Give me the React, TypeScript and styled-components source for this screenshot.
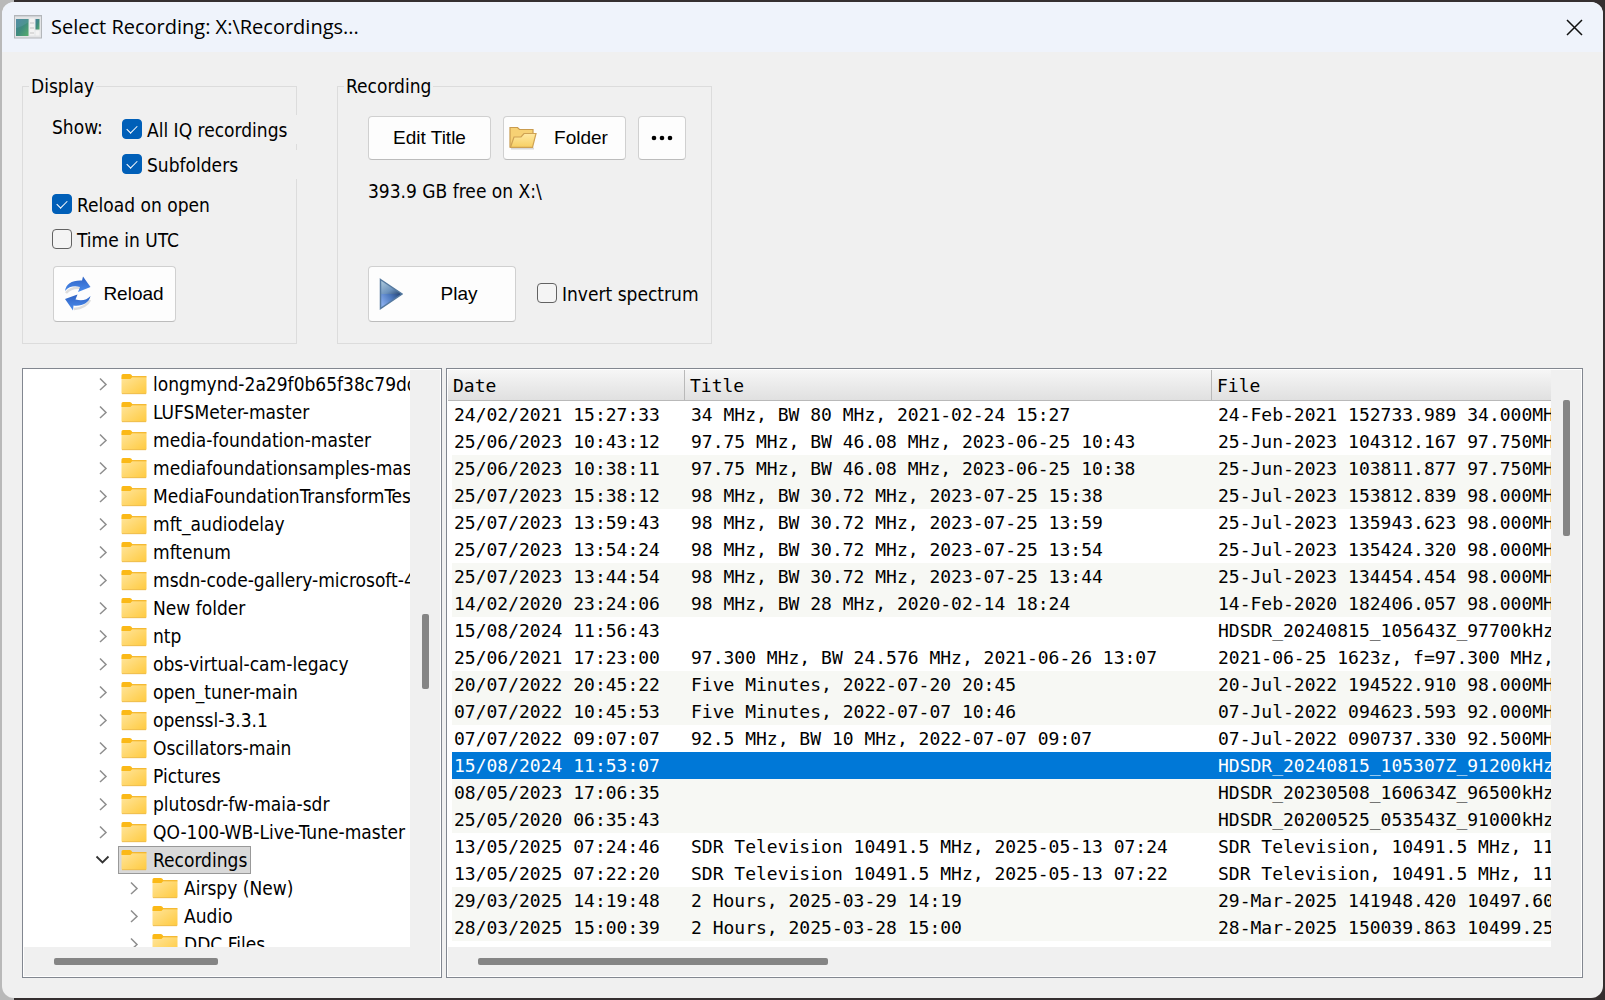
import React from "react";
import styled, { createGlobalStyle, css } from "styled-components";

const uiFont = `Tahoma, "DejaVu Sans Condensed", "Noto Sans", sans-serif`;
const buttonFont = `"Microsoft Sans Serif", "Liberation Sans", Arial, sans-serif`;
const monoFont = `Consolas, "DejaVu Sans Mono", monospace`;

const GlobalStyle = createGlobalStyle`
  *, *::before, *::after { box-sizing: border-box; }
  body {
    margin: 0;
    color: #000;
    font-family: ${uiFont};
    font-size: 19px;
    line-height: 24px;
  }
`;

const Desktop = styled.div`
  height: 100vh;
  min-height: 640px;
  padding: 2px;
  overflow: hidden;
  background: linear-gradient(to right, #b9b9b9 14px, #352f30 14px);
`;

const Dialog = styled.main`
  height: 100%;
  display: flex;
  flex-direction: column;
  overflow: hidden;
  border-radius: 12px;
  background: #f0f0f0;
`;

const TitleBar = styled.header`
  display: flex;
  align-items: center;
  flex: none;
  height: 50px;
  padding: 0 16px 0 12px;
  gap: 9px;
  background: #eff3fb;
`;

const Heading = styled.h1`
  flex: 1;
  margin: 0;
  font: 400 20px/28px "Segoe UI", "Open Sans", sans-serif;
`;

const CloseButton = styled.button`
  display: flex;
  padding: 4px;
  border: 0;
  background: none;
`;

const Content = styled.div`
  flex: 1;
  min-height: 0;
  display: flex;
  flex-direction: column;
  gap: 24px;
  padding: 21px 20px 20px;
`;

const Groups = styled.div`
  display: flex;
  flex: none;
  gap: 40px;
`;

const Group = styled.fieldset<{ $width: number }>`
  display: flex;
  flex-direction: column;
  align-items: stretch;
  width: ${(p) => p.$width}px;
  height: 271px;
  min-width: 0;
  margin: 0;
  padding: 0 0 0 29px;
  border: 1px solid #dcdcdc;
`;

const Legend = styled.legend`
  margin-left: -23px;
  padding: 0 2px;
  line-height: 27px;
`;

const ShowBlock = styled.div`
  display: flex;
  padding-top: 15px;
`;

const ShowCaption = styled.span`
  width: 70px;
  line-height: 24px;
`;

const ShowOptions = styled.div`
  flex: 1;
  display: flex;
  flex-direction: column;
  gap: 6px;
  margin-right: -1px;
`;

const Option = styled.label`
  display: flex;
  align-items: center;
  gap: 5px;
  height: 29px;
  background: #f0f0f0;
  white-space: nowrap;
`;

const checkedBox = css`
  border-color: #005fb8;
  background: #005fb8;
  &::after {
    content: "";
    width: 10px;
    height: 6px;
    margin-bottom: 2px;
    border: solid #fff;
    border-width: 0 0 1px 1px;
    transform: rotate(-45deg);
  }
`;

const Box = styled.input.attrs({ type: "checkbox" })`
  appearance: none;
  display: flex;
  align-items: center;
  justify-content: center;
  flex: none;
  width: 20px;
  height: 20px;
  margin: 0 0 2px;
  border: 1px solid #626262;
  border-radius: 4px;
  background: #f4f4f4;
  &:checked { ${checkedBox} }
`;

const OptionList = styled.div`
  display: flex;
  flex-direction: column;
  gap: 6px;
  padding: 11px 20px 0 0;
`;

const PushButton = styled.button<{ $width: number; $tall?: boolean; $inset?: number }>`
  display: flex;
  align-items: center;
  width: ${(p) => p.$width}px;
  height: ${(p) => (p.$tall ? 56 : 44)}px;
  padding: 0 0 0 ${(p) => p.$inset ?? 0}px;
  border: 1px solid #d0d0d0;
  border-bottom-color: #bcbcbc;
  border-radius: 4px;
  background: #fdfdfd;
  color: #000;
  font: 19px/24px ${buttonFont};
`;

const ButtonText = styled.span`
  flex: 1;
  display: flex;
  justify-content: center;
`;

const ReloadRow = styled.div`
  padding: 12px 0 0 1px;
`;

const RecordingBody = styled.div`
  display: flex;
  flex-direction: column;
  padding: 16px 0 0 1px;
`;

const ButtonRow = styled.div`
  display: flex;
  gap: 12px;
`;

const FreeSpace = styled.p`
  margin: 19px 0 63px;
`;

const PlayRow = styled.div`
  display: flex;
  align-items: center;
  gap: 21px;
`;

const Panes = styled.div`
  flex: 1;
  min-height: 0;
  display: flex;
  gap: 4px;
`;

const Pane = styled.section<{ $width?: number }>`
  display: grid;
  grid-template: minmax(0, 1fr) 29px / minmax(0, 1fr) 30px;
  flex: ${(p) => (p.$width ? `none` : `1`)};
  width: ${(p) => (p.$width ? `${p.$width}px` : `auto`)};
  min-width: 0;
  padding: 1px;
  border: 1px solid #828790;
  background: #fff;
`;

const Viewport = styled.div`
  overflow: hidden;
  background: #fff;
`;

const VTrack = styled.div`
  display: flex;
  flex-direction: column;
  align-items: center;
  padding-left: 1px;
  background: #f0f0f0;
`;

const HTrack = styled.div`
  grid-column: 1 / 3;
  display: flex;
  align-items: center;
  background: #f0f0f0;
`;

const Thumb = styled.div<{ $start: string; $length: string; $vertical?: boolean }>`
  flex: none;
  border-radius: 2px;
  background: #858585;
  ${(p) =>
    p.$vertical
      ? css`
          width: 7px;
          height: ${p.$length};
          margin-top: ${p.$start};
        `
      : css`
          height: 7px;
          width: ${p.$length};
          margin-left: ${p.$start};
        `}
`;

const Tree = styled.ul`
  margin: 0;
  padding: 0 0 0 68px;
  list-style: none;
`;

const Branch = styled.ul`
  margin: 0;
  padding: 0 0 0 31px;
  list-style: none;
`;

const NodeRow = styled.div`
  display: flex;
  align-items: center;
  height: 28px;
  gap: 5px;
  & svg { flex: none; }
`;

const NodeLabel = styled.span<{ $selected?: boolean }>`
  display: flex;
  flex: none;
  align-items: center;
  gap: 6px;
  height: 28px;
  padding: 0 3px 0 2px;
  border: 1px solid ${(p) => (p.$selected ? "#999" : "transparent")};
  background: ${(p) => (p.$selected ? "#d9d9d9" : "transparent")};
  white-space: nowrap;
`;

const Table = styled.table`
  width: 100%;
  table-layout: fixed;
  border-spacing: 0;
  font: 18px/27px ${monoFont};
`;

const DateCol = styled.col`
  width: 237px;
`;

const TitleCol = styled.col`
  width: 527px;
`;

const Th = styled.th`
  height: 31px;
  padding: 0 0 0 5px;
  border-right: 1px solid #b9b9b9;
  border-bottom: 1px solid #b9b9b9;
  background: linear-gradient(#f6f6f6, #e0e0e0);
  font-weight: 400;
  text-align: left;
  &:last-child { border-right: 0; }
`;

const Td = styled.td`
  height: 27px;
  padding: 0 0 0 6px;
  overflow: hidden;
  white-space: nowrap;
  &:first-child {
    padding-left: 2px;
    border-left: 4px solid #fff;
  }
`;

const Tr = styled.tr<{ $shaded: boolean; $selected: boolean }>`
  background: ${(p) => (p.$selected ? "#0078d7" : p.$shaded ? "#f7f8f4" : "#fff")};
  color: ${(p) => (p.$selected ? "#fff" : "#000")};
`;

const AppIcon = () => (
  <svg width="28" height="24" viewBox="0 0 28 24" aria-hidden="true">
    <defs>
      <linearGradient id="screen" x1="0" y1="0" x2="1" y2="1">
        <stop offset="0" stopColor="#447f9b" />
        <stop offset="0.5" stopColor="#3f8b7e" />
        <stop offset="1" stopColor="#58ad6c" />
      </linearGradient>
    </defs>
    <rect x="0.5" y="0.5" width="27" height="22.5" fill="#e3e4e6" stroke="#b3b6ba" />
    <path d="M1 1.5h26" stroke="#cfd2d6" />
    <rect x="2" y="4" width="12.5" height="17" fill="url(#screen)" />
    <path d="M2 13Q8 12 14.500 7V4H2Z" fill="#6ba3b5" opacity=".35" />
    <rect x="15.500" y="3.500" width="5" height="17" fill="#f3f3f3" />
    <path d="M16 8h4M16 13h4M16 18h4" stroke="#d3d3d3" strokeWidth="1.500" />
    <rect x="21.500" y="4" width="4" height="10.500" fill="url(#screen)" />
    <rect x="21.500" y="15.500" width="4" height="5" fill="#f3f3f3" />
  </svg>
);

const CloseIcon = () => (
  <svg width="17" height="17" viewBox="0 0 17 17" aria-hidden="true">
    <path d="M1 1L16 16M16 1L1 16" stroke="#111" strokeWidth="1.500" />
  </svg>
);

const FolderIcon = () => (
  <svg width="26" height="22" viewBox="0 0 26 22" aria-hidden="true">
    <defs>
      <linearGradient id="folder" x1="0" y1="0" x2="1" y2="1">
        <stop offset="0" stopColor="#ffe59c" />
        <stop offset="1" stopColor="#ffca3e" />
      </linearGradient>
    </defs>
    <rect x="0.500" y="3.500" width="25" height="17.500" rx="1" fill="url(#folder)" />
    <path d="M10 3.700H25.500" fill="none" stroke="#f3b424" strokeWidth="1.200" />
    <path d="M0.500 2.500Q0.500 1 2 1H9Q10.500 1 11.500 3.500L9.500 6H0.500Z" fill="#fbb917" />
    <path d="M1 20.700H25" stroke="#e9b84d" strokeWidth="0.800" />
  </svg>
);

const OpenFolderIcon = () => (
  <svg width="28" height="24" viewBox="0 0 28 24" aria-hidden="true">
    <defs>
      <linearGradient id="openFront" x1="0" y1="0" x2="0" y2="1">
        <stop offset="0" stopColor="#ffe9a3" />
        <stop offset="1" stopColor="#f7cf62" />
      </linearGradient>
    </defs>
    <path d="M2 22.500H25" stroke="#d8d8d8" strokeWidth="2" />
    <path d="M1 21V1.500H8.500L10.500 3.500H24V8L23 21Z" fill="#f7d174" stroke="#c99b4e" strokeWidth="1.200" />
    <path d="M1.500 21.300L5 11H12L15 7.500H27L23.500 21.300Z" fill="url(#openFront)" stroke="#cfa253" strokeWidth="1.200" />
  </svg>
);

const ReloadIcon = () => (
  <svg width="28" height="36" viewBox="0 0 28 36" aria-hidden="true">
    <defs>
      <linearGradient id="arrows" x1="0" y1="0" x2="0" y2="1">
        <stop offset="0" stopColor="#2f62c4" />
        <stop offset="1" stopColor="#4a8cec" />
      </linearGradient>
    </defs>
    <path d="M2 17Q7 11 17 12M10 33Q22 32 26 24" stroke="#ddd" strokeWidth="2.500" fill="none" />
    <path d="M1 15C2 8 8 4 18 4.500L19 0.500L26.500 11L14 16L16 11C10 9.500 5 10.500 1 15Z" fill="url(#arrows)" />
    <path d="M26.500 20C25 27 18 30.500 9.500 29.500L9 34.500L1 23L13.500 18.500L11.500 23.500C18 25 23 24 26.500 20Z" fill="url(#arrows)" />
  </svg>
);

const PlayIcon = () => (
  <svg width="24" height="32" viewBox="0 0 24 32" aria-hidden="true">
    <defs>
      <linearGradient id="playTop" x1="0" y1="0" x2="1" y2="1">
        <stop offset="0" stopColor="#b4cfe0" />
        <stop offset="0.600" stopColor="#6d93bd" />
        <stop offset="1" stopColor="#23426f" />
      </linearGradient>
      <linearGradient id="playBottom" x1="0" y1="0.500" x2="1" y2="0">
        <stop offset="0" stopColor="#86abeb" />
        <stop offset="0.500" stopColor="#4c78bd" />
        <stop offset="1" stopColor="#203f70" />
      </linearGradient>
    </defs>
    <path d="M1.500 1.500L23 16H1.500Z" fill="url(#playTop)" />
    <path d="M1.500 16H23L1.500 30.500Z" fill="url(#playBottom)" />
    <path d="M1.500 1.500L23 16L1.500 30.500Z" fill="none" stroke="#55799f" strokeWidth="1.500" />
  </svg>
);

const DotsIcon = () => (
  <svg width="22" height="6" viewBox="0 0 22 6" aria-hidden="true">
    <circle cx="3" cy="3" r="2.300" />
    <circle cx="11" cy="3" r="2.300" />
    <circle cx="19" cy="3" r="2.300" />
  </svg>
);

const Chevron = ({ open }: { open?: boolean }) => (
  <svg width="21" height="14" viewBox="0 0 21 14" aria-hidden="true">
    {open ? (
      <path d="M4.500 3.500L10.500 9.500L16.500 3.500" fill="none" stroke="#333" strokeWidth="1.800" />
    ) : (
      <path d="M8 1.500L14 7.500L8 13" fill="none" stroke="#8e8e8e" strokeWidth="1.500" />
    )}
  </svg>
);

const folders = [
  "longmynd-2a29f0b65f38c79dd3",
  "LUFSMeter-master",
  "media-foundation-master",
  "mediafoundationsamples-master",
  "MediaFoundationTransformTest",
  "mft_audiodelay",
  "mftenum",
  "msdn-code-gallery-microsoft-4",
  "New folder",
  "ntp",
  "obs-virtual-cam-legacy",
  "open_tuner-main",
  "openssl-3.3.1",
  "Oscillators-main",
  "Pictures",
  "plutosdr-fw-maia-sdr",
  "QO-100-WB-Live-Tune-master",
];

const subfolders = ["Airspy (New)", "Audio", "DDC Files"];

const recordings: [string, string, string][] = [
  ["24/02/2021 15:27:33", "34 MHz, BW 80 MHz, 2021-02-24 15:27", "24-Feb-2021 152733.989 34.000MHz"],
  ["25/06/2023 10:43:12", "97.75 MHz, BW 46.08 MHz, 2023-06-25 10:43", "25-Jun-2023 104312.167 97.750MHz"],
  ["25/06/2023 10:38:11", "97.75 MHz, BW 46.08 MHz, 2023-06-25 10:38", "25-Jun-2023 103811.877 97.750MHz"],
  ["25/07/2023 15:38:12", "98 MHz, BW 30.72 MHz, 2023-07-25 15:38", "25-Jul-2023 153812.839 98.000MHz"],
  ["25/07/2023 13:59:43", "98 MHz, BW 30.72 MHz, 2023-07-25 13:59", "25-Jul-2023 135943.623 98.000MHz"],
  ["25/07/2023 13:54:24", "98 MHz, BW 30.72 MHz, 2023-07-25 13:54", "25-Jul-2023 135424.320 98.000MHz"],
  ["25/07/2023 13:44:54", "98 MHz, BW 30.72 MHz, 2023-07-25 13:44", "25-Jul-2023 134454.454 98.000MHz"],
  ["14/02/2020 23:24:06", "98 MHz, BW 28 MHz, 2020-02-14 18:24", "14-Feb-2020 182406.057 98.000MHz"],
  ["15/08/2024 11:56:43", "", "HDSDR_20240815_105643Z_97700kHz"],
  ["25/06/2021 17:23:00", "97.300 MHz, BW 24.576 MHz, 2021-06-26 13:07", "2021-06-25 1623z, f=97.300 MHz,"],
  ["20/07/2022 20:45:22", "Five Minutes, 2022-07-20 20:45", "20-Jul-2022 194522.910 98.000MHz"],
  ["07/07/2022 10:45:53", "Five Minutes, 2022-07-07 10:46", "07-Jul-2022 094623.593 92.000MHz"],
  ["07/07/2022 09:07:07", "92.5 MHz, BW 10 MHz, 2022-07-07 09:07", "07-Jul-2022 090737.330 92.500MHz"],
  ["15/08/2024 11:53:07", "", "HDSDR_20240815_105307Z_91200kHz"],
  ["08/05/2023 17:06:35", "", "HDSDR_20230508_160634Z_96500kHz"],
  ["25/05/2020 06:35:43", "", "HDSDR_20200525_053543Z_91000kHz"],
  ["13/05/2025 07:24:46", "SDR Television 10491.5 MHz, 2025-05-13 07:24", "SDR Television, 10491.5 MHz, 11"],
  ["13/05/2025 07:22:20", "SDR Television 10491.5 MHz, 2025-05-13 07:22", "SDR Television, 10491.5 MHz, 11"],
  ["29/03/2025 14:19:48", "2 Hours, 2025-03-29 14:19", "29-Mar-2025 141948.420 10497.60"],
  ["28/03/2025 15:00:39", "2 Hours, 2025-03-28 15:00", "28-Mar-2025 150039.863 10499.25"],
];

const selectedRow = 13;

const Check = ({ label, checked }: { label: string; checked?: boolean }) => (
  <Option>
    <Box defaultChecked={checked} />
    {label}
  </Option>
);

const TreeNode = ({ name, open }: { name: string; open?: boolean }) => (
  <NodeRow>
    <Chevron open={open} />
    <NodeLabel $selected={open}>
      <FolderIcon />
      {name}
    </NodeLabel>
  </NodeRow>
);

export default function App() {
  return (
    <Desktop>
      <GlobalStyle />
      <Dialog>
        <TitleBar>
          <AppIcon />
          <Heading>Select Recording: X:\Recordings...</Heading>
          <CloseButton aria-label="Close">
            <CloseIcon />
          </CloseButton>
        </TitleBar>
        <Content>
          <Groups>
            <Group $width={275}>
              <Legend>Display</Legend>
              <ShowBlock>
                <ShowCaption>Show:</ShowCaption>
                <ShowOptions>
                  <Check label="All IQ recordings" checked />
                  <Check label="Subfolders" checked />
                </ShowOptions>
              </ShowBlock>
              <OptionList>
                <Check label="Reload on open" checked />
                <Check label="Time in UTC" />
              </OptionList>
              <ReloadRow>
                <PushButton $width={123} $inset={10} $tall>
                  <ReloadIcon />
                  <ButtonText>Reload</ButtonText>
                </PushButton>
              </ReloadRow>
            </Group>
            <Group $width={375}>
              <Legend>Recording</Legend>
              <RecordingBody>
                <ButtonRow>
                  <PushButton $width={123}>
                    <ButtonText>Edit Title</ButtonText>
                  </PushButton>
                  <PushButton $width={123} $inset={5}>
                    <OpenFolderIcon />
                    <ButtonText>Folder</ButtonText>
                  </PushButton>
                  <PushButton $width={48} aria-label="More">
                    <ButtonText>
                      <DotsIcon />
                    </ButtonText>
                  </PushButton>
                </ButtonRow>
                <FreeSpace>393.9 GB free on X:\</FreeSpace>
                <PlayRow>
                  <PushButton $width={148} $inset={10} $tall>
                    <PlayIcon />
                    <ButtonText>Play</ButtonText>
                  </PushButton>
                  <Check label="Invert spectrum" />
                </PlayRow>
              </RecordingBody>
            </Group>
          </Groups>
          <Panes>
            <Pane $width={420}>
              <Viewport>
                <Tree>
                  {folders.map((name) => (
                    <li key={name}>
                      <TreeNode name={name} />
                    </li>
                  ))}
                  <li>
                    <TreeNode name="Recordings" open />
                    <Branch>
                      {subfolders.map((name) => (
                        <li key={name}>
                          <TreeNode name={name} />
                        </li>
                      ))}
                    </Branch>
                  </li>
                </Tree>
              </Viewport>
              <VTrack>
                <Thumb $vertical $start="244px" $length="75px" />
              </VTrack>
              <HTrack>
                <Thumb $start="30px" $length="164px" />
              </HTrack>
            </Pane>
            <Pane>
              <Viewport>
                <Table>
                  <colgroup>
                    <DateCol />
                    <TitleCol />
                    <col />
                  </colgroup>
                  <thead>
                    <tr>
                      <Th>Date</Th>
                      <Th>Title</Th>
                      <Th>File</Th>
                    </tr>
                  </thead>
                  <tbody>
                    {recordings.map(([date, title, file], i) => (
                      <Tr key={date} $shaded={i % 4 > 1} $selected={i === selectedRow}>
                        <Td>{date}</Td>
                        <Td>{title}</Td>
                        <Td>{file}</Td>
                      </Tr>
                    ))}
                  </tbody>
                </Table>
              </Viewport>
              <VTrack>
                <Thumb $vertical $start="30px" $length="136px" />
              </VTrack>
              <HTrack>
                <Thumb $start="30px" $length="350px" />
              </HTrack>
            </Pane>
          </Panes>
        </Content>
      </Dialog>
    </Desktop>
  );
}
